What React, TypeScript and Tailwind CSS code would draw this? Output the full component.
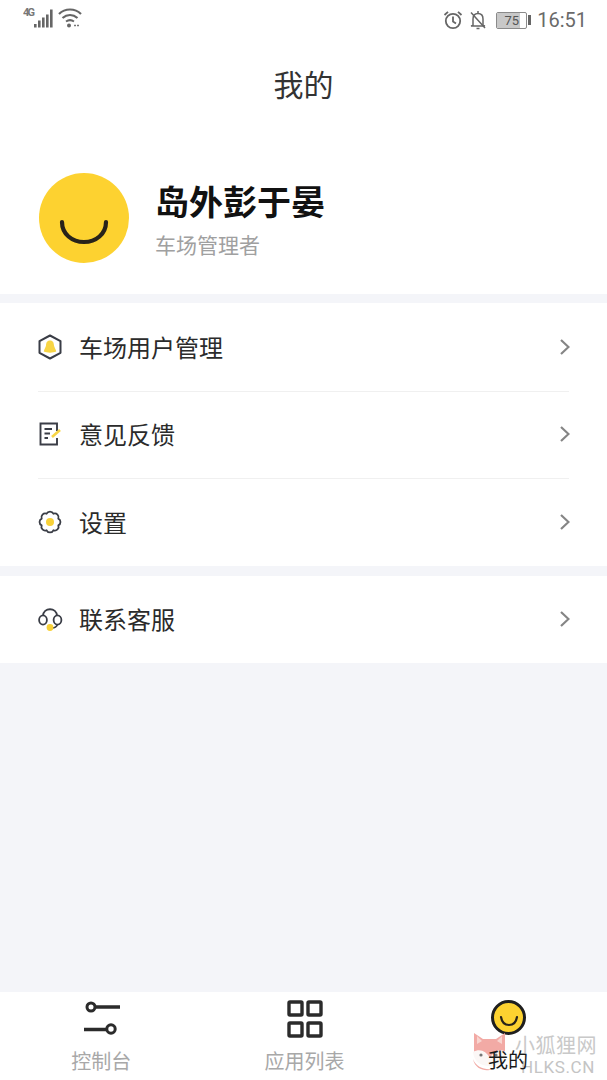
import React from "react";

const cjk = { fontFamily: '"Noto Sans CJK SC", "Noto Sans", sans-serif' };

function Chevron() {
  return (
    <svg width="10" height="16" viewBox="0 0 10 16" fill="none" stroke="#858585" strokeWidth="2.2">
      <path d="M1 1 L8.5 8 L1 15" />
    </svg>
  );
}

function HexIcon() {
  return (
    <svg width="26" height="26" viewBox="0 0 26 26" fill="none">
      <path d="M13 1.5 L23.5 7.2 V18.8 L13 24.5 L2.5 18.8 V7.2 Z" stroke="#3a3d46" strokeWidth="2" strokeLinejoin="round" />
      <path d="M13 6.5 C9.8 6.5 9.2 9 9 11.5 C8.8 13.5 7.2 14.6 6.8 17.6 C10 19 16 19 19.2 17.6 C18.8 14.6 17.2 13.5 17 11.5 C16.8 9 16.2 6.5 13 6.5 Z" fill="#f8d545" />
    </svg>
  );
}

function NoteIcon() {
  return (
    <svg width="26" height="26" viewBox="0 0 26 26" fill="none">
      <path d="M20 10 V2.5 H3.5 V23.5 H20 V17" stroke="#3a3d46" strokeWidth="1.9" />
      <path d="M7.5 8 H15 M7.5 12.5 H13 M7.5 17 H11" stroke="#3a3d46" strokeWidth="1.8" />
      <path d="M15 16 L23 9" stroke="#f8d545" strokeWidth="2.6" />
    </svg>
  );
}

function GearIcon() {
  return (
    <svg width="26" height="26" viewBox="0 0 26 26" fill="none">
      <path
        d="M21.3 16.4 A3.75 3.75 0 0 1 16.4 21.3 A3.75 3.75 0 0 1 9.6 21.3 A3.75 3.75 0 0 1 4.7 16.4 A3.75 3.75 0 0 1 4.7 9.6 A3.75 3.75 0 0 1 9.6 4.7 A3.75 3.75 0 0 1 16.4 4.7 A3.75 3.75 0 0 1 21.3 9.6 A3.75 3.75 0 0 1 21.3 16.4 Z"
        stroke="#3a3d46"
        strokeWidth="1.8"
        strokeLinejoin="round"
      />
      <circle cx="13" cy="13" r="4" fill="#f8d138" />
    </svg>
  );
}

function HeadsetIcon() {
  return (
    <svg width="26" height="26" viewBox="0 0 26 26" fill="none">
      <path d="M6 10 C6 1 20 1 20 10" stroke="#3a3d46" strokeWidth="1.8" />
      <ellipse cx="6" cy="14" rx="3.9" ry="4.6" stroke="#3a3d46" strokeWidth="1.8" />
      <ellipse cx="20.5" cy="14" rx="3.9" ry="4.6" stroke="#3a3d46" strokeWidth="1.8" />
      <path d="M20.5 18.5 C19.5 21 17.5 22 15 22" stroke="#3a3d46" strokeWidth="1.6" />
      <circle cx="13" cy="21.5" r="3.4" fill="#f8d138" />
    </svg>
  );
}

function Row({ icon, label, className }: { icon: React.ReactNode; label: string; className: string }) {
  return (
    <div className={`mx-[38px] flex items-center justify-between ${className}`}>
      <div className="flex items-center gap-[16px] -ml-px">
        {icon}
        <span className="text-[24px] leading-none text-[#2b2b2b]">{label}</span>
      </div>
      <div className="-mr-px">
        <Chevron />
      </div>
    </div>
  );
}

function StatusBar() {
  return (
    <div className="flex h-[40px] items-center justify-between pl-[23px] pr-[20px] text-[#6f6f6f]">
      <svg width="60" height="24" viewBox="0 0 60 24" fill="none" className="mt-[-4px]">
        <text x="0" y="10" fontSize="11" fontWeight="700" fill="#777" fontFamily="Roboto, sans-serif" textLength="12">4G</text>
        <rect x="11" y="18" width="2.6" height="3.5" fill="#666" />
        <rect x="15" y="14.5" width="2.6" height="7" fill="#666" />
        <rect x="19" y="11.5" width="2.6" height="10" fill="#666" />
        <rect x="23" y="8.5" width="2.6" height="13" fill="#666" />
        <rect x="27" y="3.5" width="2.6" height="18" fill="#666" />
        <path d="M36 8 C42 2 52 2 58 8" stroke="#666" strokeWidth="2.2" />
        <path d="M39.5 12 C44 8 50 8 54.5 12" stroke="#666" strokeWidth="2.2" />
        <path d="M43 15.5 C45.5 13.8 48.5 13.8 51 15.5" stroke="#666" strokeWidth="2" />
        <circle cx="46" cy="19.5" r="2" fill="#666" />
        <path d="M51 19.5 H57" stroke="#777" strokeWidth="1.6" strokeDasharray="2 1" />
      </svg>
      <div className="flex items-center">
        <svg width="20" height="20" viewBox="0 0 20 20" fill="none" stroke="#666" strokeWidth="1.8" className="mr-[5px]">
          <circle cx="10" cy="11" r="7.2" />
          <path d="M10 6.5 V11.5 L13 13.5" />
          <path d="M1.5 5 L5 1.8 M18.5 5 L15 1.8" />
        </svg>
        <svg width="20" height="20" viewBox="0 0 20 20" fill="none" stroke="#666" strokeWidth="1.5" className="mr-[8px]">
          <path d="M5 15.5 V9 C5 5.5 7 3.5 10 3.5 C13 3.5 15 5.5 15 9 V15.5 L17 16 H3 L5 15.5" />
          <path d="M8.5 18.5 H11.5 M9 2 H11 M3 2.5 L17 18" />
        </svg>
        <div className="relative flex h-[17px] w-[31px] items-center justify-center overflow-hidden rounded-[2px] border border-[#8a8a8a]">
          <div className="absolute inset-y-0 left-0 w-[78%] bg-[#c8c8c8]" />
          <span className="relative text-[13px] leading-none text-[#555]" style={{ fontFamily: "Roboto, sans-serif" }}>75</span>
        </div>
        <div className="ml-[1px] h-[10px] w-[3px] bg-[#666]" />
        <span className="ml-[6px] text-[20px] leading-none text-[#6a6a6a]" style={{ fontFamily: "Roboto, sans-serif" }}>16:51</span>
      </div>
    </div>
  );
}

function Watermark() {
  return (
    <div className="pointer-events-none absolute left-[472px] top-[1032px] flex w-[135px] items-start">
      <svg width="36" height="40" viewBox="0 0 36 40" className="shrink-0">
        <path d="M2 1 L11 7 H24 L33 1 L33 19 C31 25 25 28 18 28 C10 28 4 25 2 19 Z" fill="#f2aaa5" />
        <path d="M5 4 L10 9 L5 12 Z M30 4 L25 9 L30 12 Z" fill="#f8d5d0" />
        <path d="M1 20 C8 16 14 19 18 26 C22 19 27 16 34 20 C34 30 27 34 18 34 C9 34 2 30 1 20 Z" fill="#fbf7f6" />
        <path d="M1 27 C4 35 12 38 20 37 C15 40 3 38 1 27 Z" fill="#f2aaa5" />
        <circle cx="9" cy="23" r="1.6" fill="#777" />
        <circle cx="24" cy="23" r="1.6" fill="#777" />
      </svg>
      <div className="ml-[7px] flex flex-col" style={cjk}>
        <span className="text-[20px] leading-[26px] tracking-[0.5px] text-[#c9c9c9]">小狐狸网</span>
        <span className="mt-[-1px] ml-[6px] text-[17px] leading-[20px] tracking-[0.6px] text-[#c4c4c4]" style={{ fontFamily: "Roboto, sans-serif" }}>HLKS.CN</span>
      </div>
    </div>
  );
}

export default function App() {
  return (
    <div className="relative flex h-[1080px] w-[607px] flex-col overflow-hidden bg-[#f4f5f9]" style={cjk}>
      <div className="h-[294px] bg-white">
        <StatusBar />
        <div className="flex h-[90px] items-center justify-center pb-[4px] text-[30px] leading-none text-[#333]">我的</div>
        <div className="mt-[43px] flex items-center pl-[39px]">
          <div className="flex h-[90px] w-[90px] items-center justify-center rounded-full bg-[#fdd230]">
            <svg width="50" height="30" viewBox="0 0 50 30" fill="none" className="mt-[27px]">
              <path d="M3 5 C3 17 13 25 25 25 C37 25 47 17 47 5" stroke="#28231a" strokeWidth="4.2" strokeLinecap="round" />
            </svg>
          </div>
          <div className="ml-[26px] flex flex-col">
            <span className="text-[34px] font-bold leading-[44px] text-[#111]">岛外彭于晏</span>
            <span className="mt-[7px] text-[21px] leading-[28px] text-[#a0a0a0]">车场管理者</span>
          </div>
        </div>
      </div>

      <div className="mt-[9px] bg-white">
        <Row icon={<HexIcon />} label="车场用户管理" className="h-[89px] border-b border-[#f0f0f0]" />
        <Row icon={<NoteIcon />} label="意见反馈" className="h-[87px] pb-[2px] border-b border-[#f0f0f0]" />
        <Row icon={<GearIcon />} label="设置" className="h-[87px] pb-[2px]" />
      </div>

      <div className="mt-[10px] bg-white">
        <Row icon={<HeadsetIcon />} label="联系客服" className="h-[87px] pb-[2px]" />
      </div>

      <div className="flex-1" />

      <div className="grid h-[88px] grid-cols-3 bg-white">
        <div className="flex flex-col items-center pt-[8px]">
          <svg width="40" height="40" viewBox="0 0 40 40" fill="none" className="mr-[-2px]">
            <path d="M8 7 H38 M2 29.5 H30" stroke="#2b2b2b" strokeWidth="3.6" />
            <circle cx="9" cy="7" r="4" fill="#fff" stroke="#2b2b2b" strokeWidth="3" />
            <circle cx="29" cy="29" r="4.2" fill="#fff" stroke="#2b2b2b" strokeWidth="3" />
          </svg>
          <span className="mt-[8px] text-[20px] leading-[26px] text-[#a8a8a8]">控制台</span>
        </div>
        <div className="flex flex-col items-center pt-[8px]">
          <svg width="36" height="38" viewBox="0 0 36 38" fill="none" stroke="#2b2b2b" strokeWidth="3.4" className="mb-[10px] ml-[3px]">
            <rect x="2" y="2" width="13" height="13" rx="1" />
            <rect x="21" y="2" width="13" height="13" rx="1" />
            <rect x="2" y="23" width="13" height="13" rx="1" />
            <rect x="21" y="23" width="13" height="13" rx="1" />
          </svg>
          <span className="ml-[2px] text-[20px] leading-[26px] text-[#a8a8a8]">应用列表</span>
        </div>
        <div className="flex flex-col items-center pt-[8px]">
          <div className="ml-[6px] flex h-[35px] w-[35px] items-center justify-center rounded-full border-[3px] border-[#1f1f1f] bg-[#fdd230]">
            <svg width="20" height="12" viewBox="0 0 20 12" fill="none" className="mt-[7px]">
              <path d="M2 2 C3 8 6.5 10 10 10 C13.5 10 17 8 18 2" stroke="#28231a" strokeWidth="2.2" strokeLinecap="round" />
            </svg>
          </div>
        </div>
      </div>

      <Watermark />
      <span className="absolute left-[488px] top-[1047px] text-[20px] leading-[26px] text-[#1a1a1a]">我的</span>
    </div>
  );
}
